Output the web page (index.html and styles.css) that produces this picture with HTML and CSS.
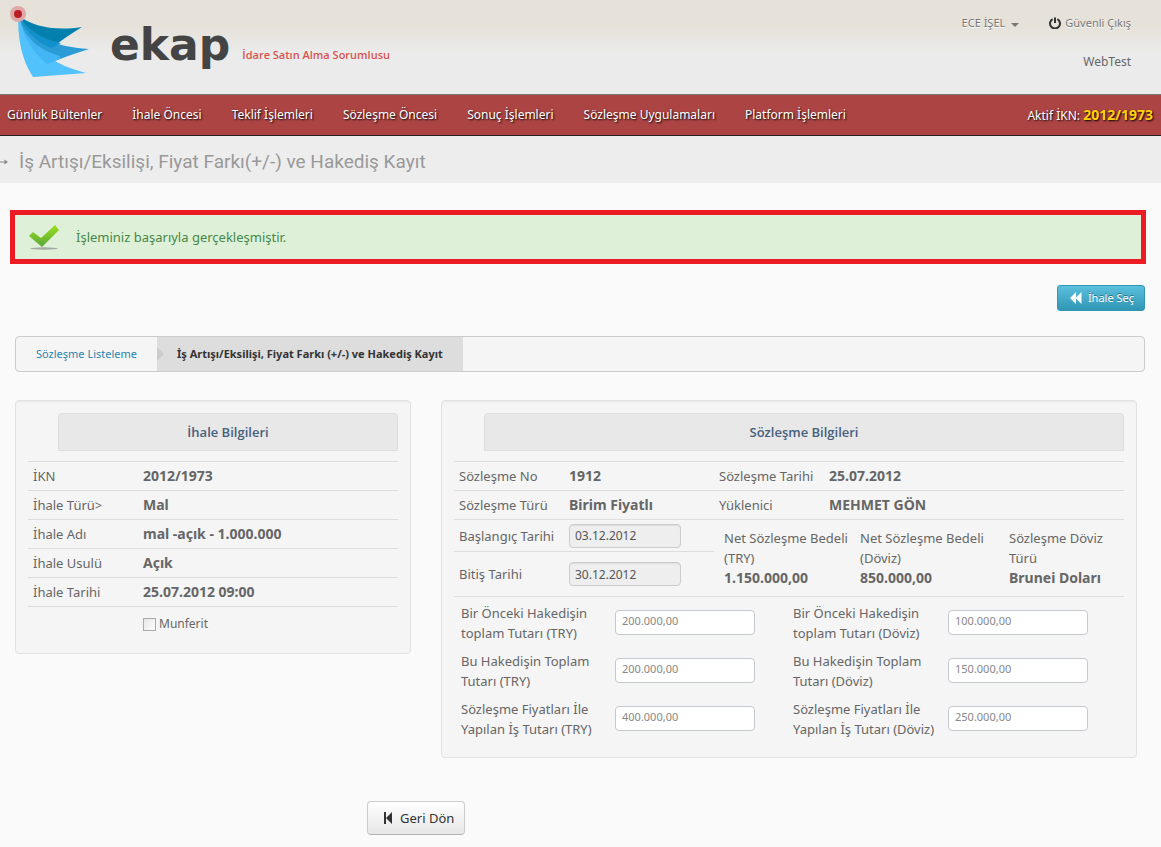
FILE: index.html
```html
<!DOCTYPE html>
<html lang="tr">
<head>
<meta charset="utf-8">
<meta name="viewport" content="width=device-width, initial-scale=1">
<title>ekap</title>
<link rel="stylesheet" href="styles.css">
</head>
<body>
<header class="header">
  <div class="brand">
    <svg class="brand-mark" viewBox="0 0 92 82" width="92" height="82" aria-hidden="true">
      <path d="M18 15 C33 27 55 31 82 27 C72 33 62 40 51 48 C37 40 26 29 18 15Z" fill="#0380ae"/>
      <path d="M18 15 C31 35 53 47 89 49 C76 53 62 58 47 64 C33 50 23 34 18 15Z" fill="#2b9bd6"/>
      <path d="M20 19 C28 29 41 39 61 43 L51 48 C36 42 26 31 20 19Z" fill="#1190cb"/>
      <path d="M18 15 C23 42 45 62 86 73 L33 77 C21 59 18 38 18 15Z" fill="#51c2fc"/>
      <path d="M20 22 C28 41 40 50 60 56 L60 59 L47 64 C32 51 24 37 20 22Z" fill="#42b5f4"/>
      <circle cx="18" cy="14" r="8" fill="#dda9a8"/>
      <circle cx="18" cy="14" r="4" fill="#b81d23"/>
    </svg>
    <span class="brand-name">ekap</span>
    <span class="brand-role">İdare Satın Alma Sorumlusu</span>
  </div>
  <div class="account">
    <div class="account-row">
      <button class="account-link" type="button">ECE İŞEL <span class="caret"></span></button>
      <a class="account-link" href="#">
        <svg viewBox="0 0 12 12" width="12" height="12" aria-hidden="true"><path d="M3.6 2.1A5 5 0 1 0 8.4 2.1M6 .5V6" fill="none" stroke="#333" stroke-width="2"/></svg>
        Güvenli Çıkış
      </a>
    </div>
    <span class="account-env">WebTest</span>
  </div>
</header>
<nav class="nav">
  <a href="#">Günlük Bültenler</a>
  <a href="#">İhale Öncesi</a>
  <a href="#">Teklif İşlemleri</a>
  <a href="#">Sözleşme Öncesi</a>
  <a href="#">Sonuç İşlemleri</a>
  <a href="#">Sözleşme Uygulamaları</a>
  <a href="#">Platform İşlemleri</a>
  <span class="nav-active">Aktif İKN: <strong>2012/1973</strong></span>
</nav>
<div class="titlebar">
  <svg class="title-arrow" viewBox="0 0 8 6" width="8" height="6" aria-hidden="true"><path d="M0 3H6" stroke="#888"/><path d="M4.500 .5 8 3 4.500 5.500Z" fill="#888"/></svg>
  <h1>İş Artışı/Eksilişi, Fiyat Farkı(+/-) ve Hakediş Kayıt</h1>
</div>
<main class="main">
  <div class="alert" role="status">
    <svg viewBox="0 0 32 26" width="32" height="26" aria-hidden="true">
      <defs><linearGradient id="tick" x1="0" y1="0" x2="0" y2="1"><stop offset="0" stop-color="#9be01c"/><stop offset="1" stop-color="#58a63a"/></linearGradient></defs>
      <ellipse cx="16" cy="24.500" rx="14" ry="1.200" fill="#a3aaa0"/>
      <path d="M1 12 5 8 13 14 27 1 31 6 14 23Z" fill="url(#tick)"/>
    </svg>
    <span>İşleminiz başarıyla gerçekleşmiştir.</span>
  </div>
  <div class="actions">
    <button class="btn-info" type="button">
      <svg viewBox="0 0 12 12" width="12" height="12" aria-hidden="true"><path d="M0 6 6 0V12ZM5.500 6 11.500 0V12Z" fill="#fff"/></svg>
      İhale Seç
    </button>
  </div>
  <nav class="crumbs">
    <a href="#">Sözleşme Listeleme</a>
    <span class="crumb-current">İş Artışı/Eksilişi, Fiyat Farkı (+/-) ve Hakediş Kayıt</span>
  </nav>
  <div class="panels">
    <section class="panel">
      <h2>İhale Bilgileri</h2>
      <table class="info tender">
        <tr><th>İKN</th><td>2012/1973</td></tr>
        <tr><th>İhale Türü&gt;</th><td>Mal</td></tr>
        <tr><th>İhale Adı</th><td>mal -açık - 1.000.000</td></tr>
        <tr><th>İhale Usulü</th><td>Açık</td></tr>
        <tr><th>İhale Tarihi</th><td>25.07.2012 09:00</td></tr>
      </table>
      <div class="check"><input type="checkbox" id="munferit"><label for="munferit">Munferit</label></div>
    </section>
    <section class="panel">
      <h2>Sözleşme Bilgileri</h2>
      <table class="info contract">
        <tr><th>Sözleşme No</th><td class="wide">1912</td><th>Sözleşme Tarihi</th><td>25.07.2012</td></tr>
        <tr><th>Sözleşme Türü</th><td class="wide">Birim Fiyatlı</td><th>Yüklenici</th><td>MEHMET GÖN</td></tr>
      </table>
      <div class="terms">
        <div class="dates">
          <div class="date-row"><label for="start">Başlangıç Tarihi</label><input id="start" type="text" value="03.12.2012" readonly></div>
          <div class="date-row date-end"><label for="end">Bitiş Tarihi</label><input id="end" type="text" value="30.12.2012" readonly></div>
        </div>
        <dl class="totals">
          <div><dt>Net Sözleşme Bedeli (TRY)</dt><dd>1.150.000,00</dd></div>
          <div><dt>Net Sözleşme Bedeli (Döviz)</dt><dd>850.000,00</dd></div>
          <div><dt>Sözleşme Döviz Türü</dt><dd>Brunei Doları</dd></div>
        </dl>
      </div>
      <form class="amounts">
        <label for="a1">Bir Önceki Hakedişin toplam Tutarı (TRY)</label><input id="a1" type="text" value="200.000,00">
        <label for="a2">Bir Önceki Hakedişin toplam Tutarı (Döviz)</label><input id="a2" type="text" value="100.000,00">
        <label for="b1">Bu Hakedişin Toplam Tutarı (TRY)</label><input id="b1" type="text" value="200.000,00">
        <label for="b2">Bu Hakedişin Toplam Tutarı (Döviz)</label><input id="b2" type="text" value="150.000,00">
        <label for="c1">Sözleşme Fiyatları İle Yapılan İş Tutarı (TRY)</label><input id="c1" type="text" value="400.000,00">
        <label for="c2">Sözleşme Fiyatları İle Yapılan İş Tutarı (Döviz)</label><input id="c2" type="text" value="250.000,00">
      </form>
    </section>
  </div>
  <div class="footer-actions">
    <button class="btn-back" type="button">
      <svg viewBox="0 0 8 12" width="8" height="12" aria-hidden="true"><path d="M0 0H2V12H0ZM2 6 8 0V12Z" fill="#333"/></svg>
      Geri Dön
    </button>
  </div>
</main>
</body>
</html>
```
FILE: styles.css
```css
* { box-sizing: border-box; }
body {
  margin: 0;
  background: #fafafa;
  color: #666;
  font: 13px/20px "Noto Sans", "Open Sans", sans-serif;
}
a { color: inherit; text-decoration: none; }
button, input { font: inherit; color: inherit; }

.header {
  display: flex;
  justify-content: space-between;
  height: 94px;
  padding: 0 30px 0 0;
  background: linear-gradient(#e6e1d8, #e6e2da 28%, #ebebeb 56%, #ebebeb);
}
.brand { display: flex; align-items: flex-start; }
.brand-name {
  padding: 18px 0 0 18px;
  color: #444;
  font: bold 44px/54px "DejaVu Sans", sans-serif;
}
.brand-role {
  padding: 45px 0 0 12px;
  color: #d9534f;
  font: 600 11px/20px "Open Sans", sans-serif;
}
.account {
  display: flex;
  flex-direction: column;
  align-items: flex-end;
  gap: 19px;
  padding-top: 13px;
  font-size: 11px;
}
.account-row { display: flex; gap: 30px; }
.account-link {
  display: flex;
  align-items: center;
  gap: 4px;
  padding: 0;
  border: 0;
  background: none;
  color: #777;
  text-shadow: 0 1px 0 #fff;
}
.account-env { font-size: 12px; }
.caret {
  margin: 4px 0 0 2px;
  border: 4px solid transparent;
  border-top-color: #777;
  border-bottom: 0;
}

.nav {
  display: flex;
  align-items: center;
  gap: 30px;
  height: 42px;
  padding: 0 8px 0 7px;
  border-top: 1px solid #777;
  border-bottom: 1px solid #222;
  background: #ad4444;
  color: #fff;
  font-size: 12px;
  text-shadow: 1px 1px 2px #000;
  white-space: nowrap;
}
.nav-active { margin-left: auto; }
.nav-active strong { color: #ffd00d; font-size: 14px; }

.titlebar {
  display: flex;
  align-items: center;
  gap: 11px;
  height: 47px;
  padding-top: 4px;
  background: #ededed;
}
.titlebar h1 {
  margin: 0;
  color: #999;
  font: 19px/30px Roboto, sans-serif;
}

.main { padding: 27px 16px 12px 15px; }
.alert {
  display: flex;
  align-items: center;
  gap: 16px;
  height: 54px;
  margin: 0 -1px 21px -5px;
  padding: 0 13px;
  border: 5px solid #ed1c24;
  background: #dff0d8;
  color: #468847;
}
.actions { display: flex; justify-content: flex-end; }
.btn-info {
  display: flex;
  align-items: center;
  gap: 6px;
  height: 26px;
  padding: 0 10px 0 12px;
  border: 1px solid #2f96b4;
  border-radius: 3px;
  background: linear-gradient(#5bc0de, #2f96b4);
  color: #fff;
  font-size: 11px;
  text-shadow: 0 -1px 0 #2a7288;
}
.crumbs {
  display: flex;
  height: 36px;
  margin: 25px 0 28px;
  border: 1px solid #ccc;
  border-radius: 4px;
  background: #f5f5f5;
  font-size: 11px;
  line-height: 34px;
}
.crumbs a { padding: 0 20px; color: #2a85b0; }
.crumb-current {
  position: relative;
  padding: 0 20px;
  background: #ddd;
  color: #333;
  font-weight: bold;
}
.crumb-current::before {
  content: "";
  position: absolute;
  left: 0;
  top: 10px;
  border: 7px solid transparent;
  border-left-color: #ccc;
  border-right: 0;
}

.panels {
  display: grid;
  grid-template-columns: 396fr 696fr;
  align-items: start;
  gap: 30px;
  margin-right: 8px;
}
.panel {
  padding: 12px 12px 18px;
  border: 1px solid #e3e3e3;
  border-radius: 4px;
  background: #f5f5f5;
  box-shadow: inset 0 1px 1px #0000000d;
}
.panel h2 {
  margin: 0 0 10px 30px;
  border: 1px solid #ddd;
  border-radius: 4px 4px 0 0;
  background: #e8e8e8;
  color: #45607d;
  font: 600 13px/36px "Open Sans", sans-serif;
  text-align: center;
}
.info {
  width: 100%;
  border-collapse: collapse;
  table-layout: fixed;
  border-bottom: 1px solid #ddd;
}
.info th, .info td {
  padding: 4px 5px;
  border-top: 1px solid #ddd;
  text-align: left;
}
.info th { width: 110px; font-weight: normal; white-space: nowrap; }
.info td { font-size: 14px; font-weight: bold; }
.info .wide { width: 150px; }
.check {
  display: flex;
  align-items: center;
  gap: 3px;
  padding: 7px 0 1px 115px;
  font-size: 12px;
}
.check input {
  appearance: none;
  width: 13px;
  height: 13px;
  margin: 0;
  border: 1px solid #aaa;
  background: linear-gradient(135deg, #e6e6e6, #fff);
}

.contract { border-bottom: 0; }
.terms {
  display: flex;
  border-top: 1px solid #ddd;
  border-bottom: 1px solid #ddd;
}
.dates { flex: 0 0 260px; }
.date-row {
  display: flex;
  align-items: center;
  height: 32px;
  padding-left: 5px;
  border-bottom: 1px solid #ddd;
}
.date-row label { width: 110px; }
.date-row input {
  width: 112px;
  height: 24px;
  padding: 0 5px;
  border: 1px solid #ccc;
  border-radius: 4px;
  background: #eee;
  color: #555;
  font-size: 12px;
  box-shadow: inset 0 1px 1px #00000013;
}
.date-end { height: 44px; border-bottom: 0; }
.totals {
  display: grid;
  flex: 1;
  grid-template-columns: 136fr 149fr 115fr;
  margin: 0;
  padding: 8px 0 8px 10px;
}
.totals div { padding-right: 8px; }
.totals dd { margin: 0; font-size: 14px; font-weight: bold; }

.amounts {
  display: grid;
  grid-template-columns: 154fr 178fr 155fr 176fr;
  row-gap: 8px;
  padding: 6px 0 0 7px;
}
.amounts label { padding-right: 6px; }
.amounts input {
  width: 140px;
  height: 25px;
  margin-top: 7px;
  padding: 0 6px 4px;
  border: 1px solid #c4c8d0;
  border-radius: 4px;
  background: #fff;
  color: #888;
  font-size: 11px;
}

.footer-actions { padding: 43px 0 0 352px; }
.btn-back {
  display: flex;
  align-items: center;
  gap: 8px;
  height: 34px;
  padding: 0 10px 0 16px;
  border: 1px solid #ccc;
  border-bottom-color: #b3b3b3;
  border-radius: 4px;
  background: linear-gradient(#fff, #e6e6e6);
  color: #333;
}
```
